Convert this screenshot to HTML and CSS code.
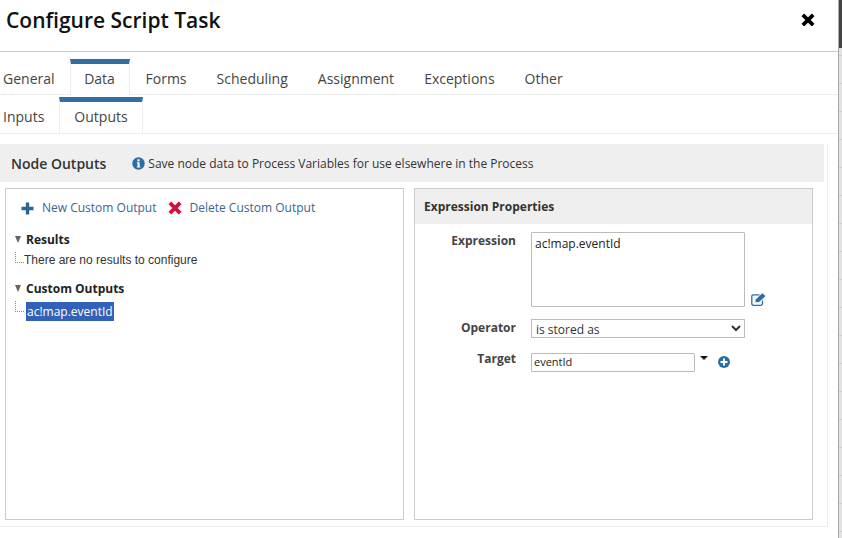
FILE: index.html
```html
<!DOCTYPE html>
<html lang="en">

<head>
    <meta charset="UTF-8">
    <title>Configure Script Task</title>
    <link rel="stylesheet" href="styles.css">
</head>

<body>
    <div class="window">
        <div class="dialog">
            <header class="dialog-header">
                <h1>Configure Script Task</h1>
                <svg class="close-icon" width="14" height="14" viewBox="0 0 14 14">
                    <path d="M3.2 1 7 4.8 10.8 1 13 3.2 9.2 7 13 10.8 10.8 13 7 9.200 3.200 13 1 10.800 4.800 7 1 3.200Z" fill="#000" stroke="#000" stroke-linejoin="round"/>
                </svg>
            </header>

            <nav class="tabs main-tabs">
                <a class="tab">General</a>
                <a class="tab active">Data</a>
                <a class="tab">Forms</a>
                <a class="tab">Scheduling</a>
                <a class="tab">Assignment</a>
                <a class="tab">Exceptions</a>
                <a class="tab">Other</a>
            </nav>

            <nav class="tabs sub-tabs">
                <a class="tab">Inputs</a>
                <a class="tab active">Outputs</a>
            </nav>

            <section class="outputs">
                <div class="section-title">
                    <strong>Node Outputs</strong>
                    <svg class="info-icon" width="13" height="13" viewBox="0 0 13 13">
                        <circle cx="6.500" cy="6.500" r="6.200" fill="#2a6ea8"/>
                        <rect x="5.400" y="2.300" width="2.200" height="2" fill="#fff"/>
                        <path d="M4.800 5.200H7.600V9.500H8.400V10.600H4.800V9.500H5.500V6.300H4.800Z" fill="#fff"/>
                    </svg>
                    <span>Save node data to Process Variables for use elsewhere in the Process</span>
                </div>

                <div class="columns">
                    <div class="panel tree-panel">
                        <div class="toolbar">
                            <a class="tool">
                                <svg width="13" height="13" viewBox="0 0 13 13">
                                    <path d="M4.800 .5H8.200V4.800H12.500V8.200H8.200V12.500H4.800V8.200H.5V4.800H4.800Z" fill="#2a6496"/>
                                </svg>
                                New Custom Output
                            </a>
                            <a class="tool">
                                <svg width="14" height="14" viewBox="0 0 14 14">
                                    <path d="M3.200 .5 7 4.300 10.800 .5 13.500 3.200 9.700 7 13.500 10.800 10.800 13.500 7 9.700 3.200 13.500 .5 10.800 4.300 7 .5 3.200Z" fill="#d4113a"/>
                                </svg>
                                Delete Custom Output
                            </a>
                        </div>

                        <div class="tree-group">
                            <div class="tree-head"><span class="arrow"></span>Results</div>
                            <div class="tree-leaf"><span class="dots"></span>There are no results to configure</div>
                        </div>

                        <div class="tree-group">
                            <div class="tree-head"><span class="arrow"></span>Custom Outputs</div>
                            <div class="tree-leaf"><span class="dots"></span><span class="selected">ac!map.eventId</span></div>
                        </div>
                    </div>

                    <div class="panel props-panel">
                        <div class="props-title">Expression Properties</div>
                        <div class="props-form">
                            <label>Expression</label>
                            <div class="field-row">
                                <textarea class="expression" readonly>ac!map.eventId</textarea>
                                <svg class="edit-icon" width="15" height="13" viewBox="0 0 15 13">
                                    <path d="M11.500 7.500V10.500Q11.500 12.300 9.700 12.300H2.500Q.8 12.300 .8 10.500V3.500Q.8 1.800 2.500 1.800H8.500" fill="none" stroke="#2a6ea8" stroke-width="1.300"/>
                                    <path d="M4.300 9.200 4.900 6.300 11.300 .3 14.500 3 8 9Z" fill="#2a6ea8"/>
                                </svg>
                            </div>

                            <label>Operator</label>
                            <div class="field-row">
                                <select class="operator">
                                    <option>is stored as</option>
                                </select>
                            </div>

                            <label class="target-label">Target</label>
                            <div class="field-row">
                                <input class="target" type="text" value="eventId" readonly>
                                <span class="caret"></span>
                                <svg class="add-icon" width="12" height="12" viewBox="0 0 12 12">
                                    <circle cx="6" cy="6" r="6" fill="#2a6ea8"/>
                                    <path d="M5 2.500H7V5H9.500V7H7V9.500H5V7H2.500V5H5Z" fill="#fff"/>
                                </svg>
                            </div>
                        </div>
                    </div>
                </div>
            </section>
        </div>
        <div class="page-behind"></div>
    </div>
</body>

</html>
```

FILE: styles.css
```css
* {
    box-sizing: border-box;
}

html,
body {
    margin: 0;
    height: 100%;
    overflow: hidden;
}

body {
    background: #fff;
    color: #333;
    font-family: "Open Sans", "Liberation Sans", sans-serif;
    font-size: 12px;
}

.window {
    display: flex;
    height: 538px;
}

.dialog {
    width: 838px;
    flex: none;
}

.page-behind {
    flex: 1;
    border-left: 1px solid #aaa;
    background:
        linear-gradient(#444, #444) top / 100% 48px no-repeat,
        repeating-linear-gradient(#e2e2e2 0 27px, #cfcfcf 27px 28px);
}

.dialog-header {
    height: 52px;
    padding: 0 23px 0 6px;
    display: flex;
    justify-content: space-between;
    border-bottom: 1px solid #ccc;
}

.dialog-header h1 {
    margin: 5px 0 0;
    font-size: 21px;
    line-height: 30px;
    font-weight: 600;
    color: #111;
}

.close-icon {
    margin-top: 13px;
}

.tabs {
    display: flex;
    border-bottom: 1px solid #eee;
}

.tab {
    color: #444;
    font-size: 14px;
    text-align: center;
}

.main-tabs {
    height: 43px;
    padding: 7px 0 0 3px;
    gap: 30px;
}

.main-tabs .tab {
    line-height: 24px;
    padding-top: 8px;
}

.main-tabs .tab.active {
    width: 60px;
    margin: 0 -14px 0 -15px;
    border-top: 5px solid #336ea3;
    border-left: 1px solid #eee;
    border-right: 1px solid #eee;
    padding-top: 3px;
    background: #fff;
    height: 36px;
}

.sub-tabs {
    height: 39px;
    padding: 2px 0 0 3px;
}

.sub-tabs .tab {
    line-height: 24px;
    padding-top: 8px;
}

.sub-tabs .tab:first-child {
    width: 56px;
    text-align: left;
}

.sub-tabs .tab.active {
    width: 84px;
    border-top: 5px solid #336ea3;
    border-left: 1px solid #eee;
    border-right: 1px solid #eee;
    padding-top: 3px;
    height: 37px;
}

.outputs {
    width: 828px;
    height: 383px;
    margin-top: 10px;
    padding-right: 3px;
    border-right: 1px solid #eee;
    border-bottom: 1px solid #eee;
}

.section-title {
    height: 38px;
    background: #efefef;
    display: flex;
    align-items: center;
    padding-left: 11px;
    font-size: 12px;
}

.section-title strong {
    font-size: 14px;
    font-weight: 600;
    color: #333;
    margin-right: 26px;
}

.section-title span {
    margin-left: 3px;
}

.columns {
    display: flex;
    gap: 10px;
    padding: 6px 0 0 5px;
}

.panel {
    height: 332px;
    border: 1px solid #ccc;
}

.tree-panel {
    width: 399px;
    padding: 11px 0 0 9px;
}

.props-panel {
    width: 399px;
}

.toolbar {
    display: flex;
    gap: 11px;
    padding-left: 6px;
    margin-bottom: 15px;
}

.tool {
    display: flex;
    align-items: center;
    gap: 8px;
    color: #3a6690;
    font-size: 12px;
    line-height: 16px;
}

.tree-group {
    margin-bottom: 11px;
}

.tree-head {
    display: flex;
    align-items: center;
    font-size: 12px;
    font-weight: 700;
    color: #222;
    line-height: 17px;
    margin-bottom: 3px;
}

.arrow {
    width: 0;
    height: 0;
    margin-right: 5px;
    border-left: 3.500px solid transparent;
    border-right: 3.500px solid transparent;
    border-top: 7px solid #666;
}

.tree-leaf {
    display: flex;
    align-items: center;
    height: 18px;
    font-family: "Liberation Sans", sans-serif;
    font-size: 12px;
    color: #333;
}

.dots {
    width: 9px;
    height: 11px;
    margin: -6px 0 0 0;
    border-left: 1px dotted #888;
    border-bottom: 1px dotted #888;
}

.selected {
    background: #3262b8;
    color: #fff;
    font-family: "Open Sans", sans-serif;
    line-height: 19px;
    padding: 0 1px;
    margin: 5px 0 0 2px;
}

.props-title {
    height: 35px;
    background: #efefef;
    padding-left: 9px;
    font-size: 12px;
    font-weight: 700;
    line-height: 36px;
    color: #333;
}

.props-form {
    display: grid;
    grid-template-columns: 101px 1fr;
    column-gap: 15px;
    padding-top: 8px;
}

.props-form label {
    text-align: right;
    font-size: 12px;
    font-weight: 700;
    color: #444;
    line-height: 17px;
}

.props-form .target-label {
    margin-top: -3px;
}

.field-row {
    display: flex;
    align-items: flex-start;
}

.expression {
    width: 214px;
    height: 75px;
    margin: 0 0 12px;
    padding: 3px 3px;
    border: 1px solid #bbb;
    border-radius: 1px;
    font-family: "Open Sans", sans-serif;
    font-size: 12px;
    line-height: 15px;
    color: #222;
    resize: none;
    outline: none;
}

.edit-icon {
    margin: 61px 0 0 6px;
}

.operator {
    width: 214px;
    height: 19px;
    margin-bottom: 15px;
    padding: 0;
    border: 1px solid #bbb;
    border-radius: 0;
    background: #fff;
    font-family: "Open Sans", sans-serif;
    font-size: 12px;
    color: #333;
}

.target {
    width: 164px;
    height: 19px;
    padding: 0 2px 2px;
    border: 1px solid #bbb;
    border-radius: 1px;
    font-family: "Open Sans", sans-serif;
    font-size: 11px;
    color: #222;
    outline: none;
}

.caret {
    width: 0;
    height: 0;
    margin: 3px 0 0 5px;
    border-left: 4px solid transparent;
    border-right: 4px solid transparent;
    border-top: 4px solid #111;
}

.add-icon {
    margin: 3px 0 0 10px;
}
```
